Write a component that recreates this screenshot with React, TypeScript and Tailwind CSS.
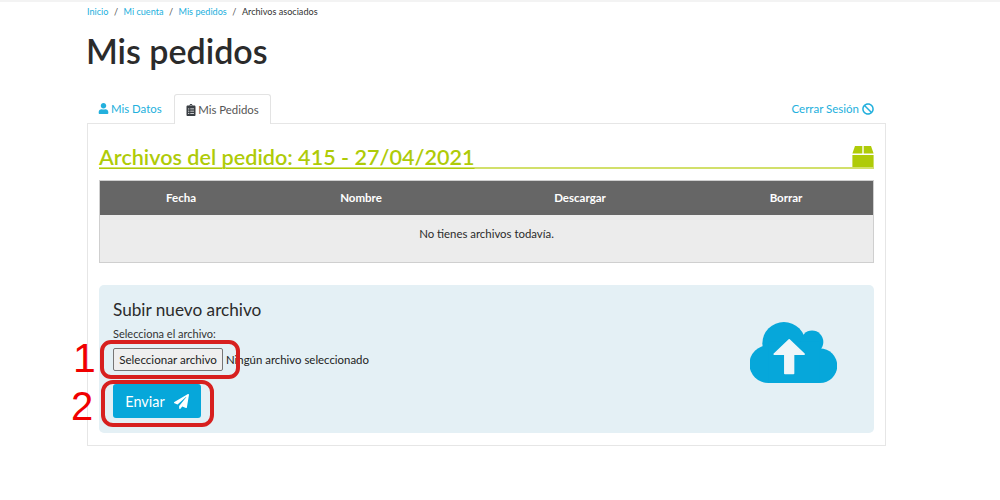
import { FaUser, FaClipboardList, FaBan, FaPaperPlane } from 'react-icons/fa';

const crumbs = ['Inicio', 'Mi cuenta', 'Mis pedidos'];
const columns = ['Fecha', 'Nombre', 'Descargar', 'Borrar'];

function BoxIcon() {
  return (
    <svg width="22" height="21" viewBox="0 0 22 21" fill="#afcb08">
      <path d="M3 0h7.3v7.5H0.4z" />
      <path d="M11.7 0H19l2.6 7.5h-9.9z" />
      <rect x="0.4" y="9" width="21.2" height="12" />
    </svg>
  );
}

function CloudIcon() {
  return (
    <svg width="87" height="61" viewBox="0 0 262 184" className="mt-[37px]">
      <g fill="#06a7da">
        <circle cx="102" cy="65" r="65" />
        <circle cx="187" cy="60" r="34" />
        <circle cx="55" cy="127" r="57" />
        <circle cx="211" cy="132" r="52" />
        <rect x="55" y="60" width="155" height="124" />
      </g>
      <path
        d="M118 54 L73 97 H105 V155 H131 V97 H163 Z"
        fill="#eef6f9"
        stroke="#eef6f9"
        strokeWidth="5"
        strokeLinejoin="round"
      />
    </svg>
  );
}

export default function App() {
  return (
    <div className="relative w-[1000px] h-[500px] overflow-hidden bg-white font-['Lato','Noto_Sans',sans-serif] text-[#212529]">
      <div className="h-[2px] bg-[#f3f3f3]" />
      <div className="w-[799px] ml-[87px]">
        {/* migas */}
        <div className="flex items-center h-[20px] text-[9.1px] text-[#23b0dd]">
          {crumbs.map((c) => (
            <span key={c} className="flex">
              <span>{c}</span>
              <span className="mx-[5.5px] text-[#555]">/</span>
            </span>
          ))}
          <span className="text-[#333]">Archivos asociados</span>
        </div>
        <h1 className="text-[34px] leading-[44px] mt-[7px] -ml-px font-semibold text-[#2b2b2b]">Mis pedidos</h1>

        {/* pestañas */}
        <div className="flex justify-between items-start mt-[21px] h-[29px]">
          <div className="flex h-[29px] text-[11.4px]">
            <div className="flex items-center pl-[11px] w-[87px] text-[#23b0dd]">
              <FaUser className="w-[11px] h-[11px] mr-[2px] shrink-0" />
              <span className="whitespace-nowrap">Mis Datos</span>
            </div>
            <div className="relative z-10 flex items-center justify-center w-[97px] h-[30px] bg-white border border-b-0 border-[#e3e3e3] rounded-t-[3px] text-[#555]">
              <FaClipboardList className="w-[10px] h-[12px] mr-[2px] shrink-0 text-[#3a3f44]" />
              <span className="whitespace-nowrap">Mis Pedidos</span>
            </div>
          </div>
          <div className="flex items-center h-[29px] mr-[12px] text-[11.5px] text-[#23b0dd]">
            <span>Cerrar Sesión</span>
            <FaBan className="w-[12px] h-[12px] ml-[3px]" />
          </div>
        </div>

        {/* panel */}
        <div className="border border-[#e6e6e6] h-[323px] px-[11px]">
          <div className="flex justify-between items-end h-[45px] border-b-2 border-[#d2e06b]">
            <span className="text-[21.6px] leading-[26px] font-semibold text-[#afcb08] underline decoration-[1px] underline-offset-[3px] -mb-[3px]">
              Archivos del pedido: 415 - 27/04/2021
            </span>
            <BoxIcon />
          </div>

          <div className="mt-[11px] border border-[#cfcfcf]">
            <div className="grid grid-cols-[162px_198px_240px_172px] items-center h-[34px] bg-[#666666] text-white text-[11.5px] font-bold">
              {columns.map((c) => (
                <div key={c} className="text-center">{c}</div>
              ))}
            </div>
            <div className="h-[47px] pt-[10px] bg-[#ececec] text-center text-[11.4px] text-[#2b2b2b]">
              No tienes archivos todavía.
            </div>
          </div>

          <div className="flex justify-between mt-[22px] h-[148px] rounded-[5px] bg-[#e4f0f5] pl-[14px] pr-[37px]">
            <div>
              <div className="mt-[15px] text-[17.2px] leading-[20px] text-[#2b2b2b]">Subir nuevo archivo</div>
              <div className="mt-[7px] text-[11px] leading-[14px] text-[#333]">Selecciona el archivo:</div>
              <div className="flex items-center mt-[7px] h-[23px] text-[11.4px] text-[#222]">
                <div className="flex items-center justify-center w-[110px] h-[23px] bg-[#efefef] border border-[#767676] rounded-[2px] text-[11.6px]">
                  Seleccionar archivo
                </div>
                <span className="ml-[3px]">Ningún archivo seleccionado</span>
              </div>
              <div className="flex items-center justify-center gap-[9px] mt-[13px] pt-[1px] w-[88px] h-[34px] rounded-[3px] bg-[#06a7da] text-white text-[14.4px]">
                Enviar
                <FaPaperPlane className="w-[15px] h-[15px]" />
              </div>
            </div>
            <CloudIcon />
          </div>
        </div>
      </div>

      {/* anotaciones rojas sobre la captura */}
      <div className="absolute left-[100px] top-[340px] w-[140px] h-[39px] rounded-[11px] border-[4px] border-[#d7201f]" />
      <div className="absolute left-[101px] top-[380px] w-[113px] h-[47px] rounded-[12px] border-[4px] border-[#d7201f]" />
      <div className="absolute left-[73px] top-[335px] font-['Liberation_Sans',sans-serif] text-[41px] leading-[46px] text-[#f00000]">1</div>
      <div className="absolute left-[71px] top-[383px] font-['Liberation_Sans',sans-serif] text-[40px] leading-[46px] text-[#f00000]">2</div>
    </div>
  );
}
